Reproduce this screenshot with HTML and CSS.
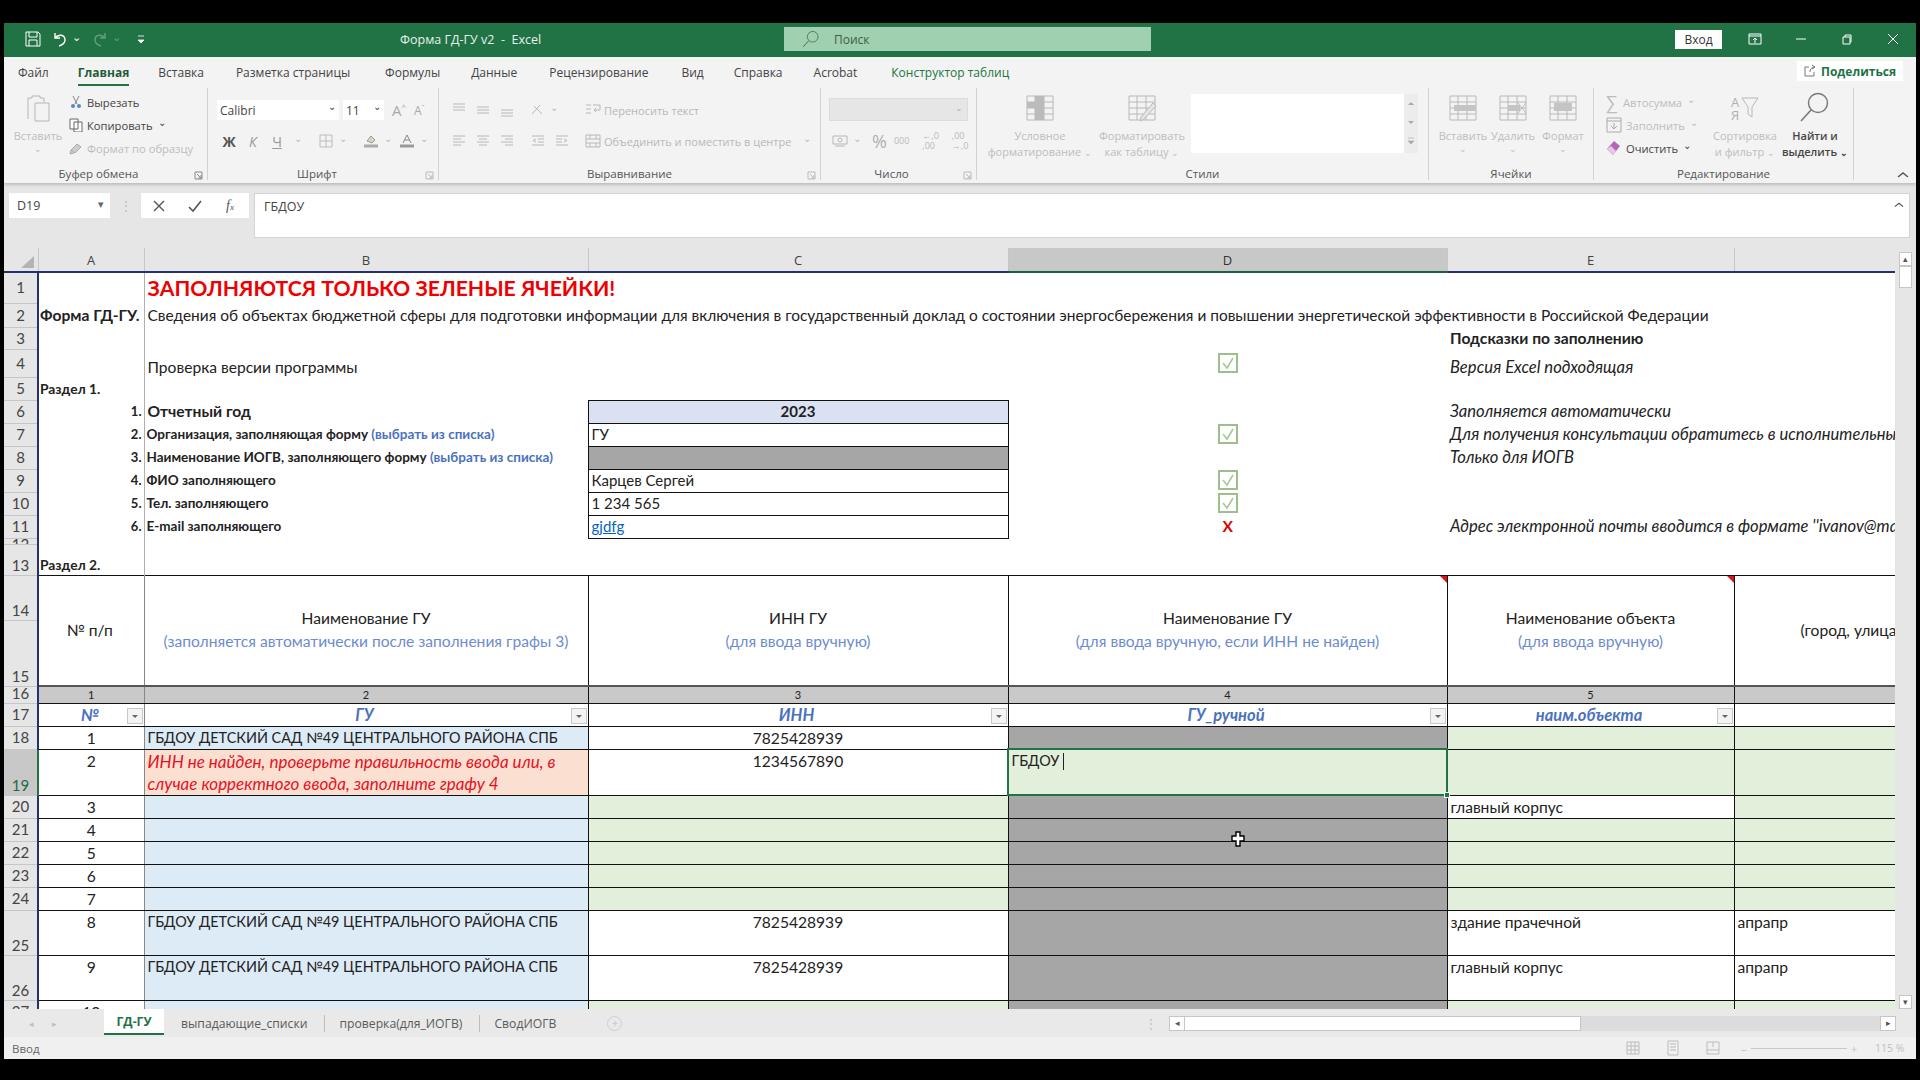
FILE: index.html
```html
<!DOCTYPE html>
<html lang="ru">
<head>
    <meta charset="UTF-8">
    <title>Форма ГД-ГУ v2 - Excel</title>
    <link rel="stylesheet" href="styles.css">
</head>
<body>
<svg class="defs" xmlns="http://www.w3.org/2000/svg">
    <symbol id="check" viewBox="0 0 20 20"><rect x="1" y="1" width="18" height="18" fill="#fff" stroke="#9dbf8b" stroke-width="2"/><path d="M5 10l4 5 6-10" fill="none" stroke="#a8c898" stroke-width="1.6"/></symbol>
    <symbol id="drop" viewBox="0 0 16 16"><rect x=".5" y=".5" width="15" height="15" fill="#f3f3f3" stroke="#c8c8c8"/><path d="M5 7h6l-3 3z" fill="#666"/></symbol>
    <symbol id="lines-l" viewBox="0 0 16 16"><path d="M2 3h12M2 6h8M2 9h12M2 12h8" stroke="currentColor" fill="none"/></symbol>
    <symbol id="lines-c" viewBox="0 0 16 16"><path d="M2 3h12M4 6h8M2 9h12M4 12h8" stroke="currentColor" fill="none"/></symbol>
    <symbol id="lines-r" viewBox="0 0 16 16"><path d="M2 3h12M6 6h8M2 9h12M6 12h8" stroke="currentColor" fill="none"/></symbol>
    <symbol id="table" viewBox="0 0 30 30"><path d="M2 3h26v24H2zM2 9h26M2 15h26M2 21h26M10 3v24M19 3v24" stroke="currentColor" fill="none"/></symbol>
    <symbol id="lens" viewBox="0 0 32 32"><circle cx="19" cy="12" r="9.5" fill="none" stroke="currentColor" stroke-width="1.4"/><path d="M12 19L2 30" stroke="currentColor" stroke-width="1.6"/></symbol>
</svg>
<div class="window">
    <header class="titlebar">
        <div class="qat">
            <svg class="qi" viewBox="0 0 18 18"><path d="M2 2h12l2 2v12H2zM5 2v5h8V2M5 16v-6h8v6" fill="none" stroke="#fff"/></svg>
            <svg class="qi" viewBox="0 0 18 18"><path d="M4 3v5h5M4 8c3-4 10-4 10 2 0 3-3 5-6 6" fill="none" stroke="#fff" stroke-width="1.4"/></svg>
            <span class="qa">⌄</span>
            <svg class="qi dim" viewBox="0 0 18 18"><path d="M14 3v5H9M14 8C11 4 4 4 4 10c0 3 3 5 6 6" fill="none" stroke="#fff" stroke-width="1.4"/></svg>
            <span class="qa dim">⌄</span>
            <svg class="qc" viewBox="0 0 10 12"><path d="M2 3h6M2 7h6l-3 3z" fill="#fff" stroke="#fff" stroke-width=".8"/></svg>
        </div>
        <div class="doc-title">Форма ГД-ГУ v2&nbsp; -&nbsp; Excel</div>
        <div class="search">
            <svg class="search-ico" viewBox="0 0 32 32"><use href="#lens"/></svg>
            <span>Поиск</span>
        </div>
        <button class="signin">Вход</button>
        <svg class="win win-opt" viewBox="0 0 14 14"><path d="M1 2h12v10H1zM1 4h12M7 11V6M5 8l2-2 2 2" fill="none" stroke="#fff"/></svg>
        <svg class="win" viewBox="0 0 14 14"><path d="M2 7h10" stroke="#fff"/></svg>
        <svg class="win" viewBox="0 0 14 14"><path d="M3 5h7v7H3zM5 5V3h6v7h-1" fill="none" stroke="#fff"/></svg>
        <svg class="win" viewBox="0 0 14 14"><path d="M2 2l10 10M12 2L2 12" stroke="#fff"/></svg>
    </header>

    <nav class="tabs">
        <span class="tab t-file">Файл</span>
        <span class="tab t-home">Главная</span>
        <span class="tab t-ins">Вставка</span>
        <span class="tab t-page">Разметка страницы</span>
        <span class="tab t-form">Формулы</span>
        <span class="tab t-data">Данные</span>
        <span class="tab t-rev">Рецензирование</span>
        <span class="tab t-view">Вид</span>
        <span class="tab t-help">Справка</span>
        <span class="tab t-acro">Acrobat</span>
        <span class="tab t-design">Конструктор таблиц</span>
        <span class="share">
            <svg class="share-ico" viewBox="0 0 14 14"><path d="M6 3H2v9h9V8M7 8c0-3 2-5 5-5M9 1l3 2-3 2" fill="none" stroke="#777"/></svg>
            Поделиться
        </span>
    </nav>

    <section class="ribbon">
        <div class="group g-clip">
            <div class="group-body clip-body">
                <div class="big paste">
                    <svg class="big-ico" viewBox="0 0 30 30"><path d="M5 26V5h4V3h8v2h4v4M12 10h14v18H12z" fill="none" stroke="#b5b5b5"/></svg>
                    <span>Вставить</span>
                    <span class="tiny">⌄</span>
                </div>
                <div class="small-col">
                    <div class="small dark"><svg class="si" viewBox="0 0 14 14"><path d="M4 1l4 8M10 1L6 9" stroke="#888" fill="none"/><circle cx="4" cy="11" r="2" fill="#5a88c8"/><circle cx="10" cy="11" r="2" fill="#5a88c8"/></svg>Вырезать</div>
                    <div class="small dark"><svg class="si" viewBox="0 0 14 14"><path d="M1 1h8v10H1zM5 4h8v10H5z" fill="#fff" stroke="#666"/></svg>Копировать <span class="arrow">⌄</span></div>
                    <div class="small off"><svg class="si" viewBox="0 0 14 14"><path d="M2 9l6-6 4 3-6 6zM2 9l-1 4 4-1" fill="#ccc" stroke="#aaa"/></svg>Формат по образцу</div>
                </div>
            </div>
            <div class="group-label">Буфер обмена</div>
            <svg class="launcher" viewBox="0 0 9 9"><path d="M1 1h7v7H1zM3 3l4 4M7 4v3H4" fill="none" stroke="#888"/></svg>
        </div>

        <div class="group g-font">
            <div class="group-body font-body">
                <div class="row">
                    <span class="combo combo-font">Calibri<i>⌄</i></span>
                    <span class="combo combo-size">11<i>⌄</i></span>
                    <span class="glyph font-up">A<sup>^</sup></span>
                    <span class="glyph font-down">A<sup>ˇ</sup></span>
                </div>
                <div class="row row-fmt">
                    <b class="fmt">Ж</b><i class="fmt off-text">К</i><u class="fmt off-text">Ч</u><span class="arrow off-text">⌄</span>
                    <svg class="ri sep-left" viewBox="0 0 16 16"><path d="M2 2h12v12H2zM2 8h12M8 2v12" fill="none" stroke="#bbb"/></svg><span class="arrow off-text">⌄</span>
                    <svg class="ri sep-left" viewBox="0 0 16 16"><path d="M4 8l4-5 4 4-3 3z" fill="#cfd8c4" stroke="#999"/><path d="M1 13h14" stroke="#aaa" stroke-width="3"/></svg><span class="arrow off-text">⌄</span>
                    <svg class="ri font-color" viewBox="0 0 16 16"><path d="M4 10l4-8 4 8M5.500 7h5" fill="none" stroke="#888"/><path d="M1 13h14" stroke="#999" stroke-width="3"/></svg><span class="arrow off-text">⌄</span>
                </div>
            </div>
            <div class="group-label">Шрифт</div>
            <svg class="launcher" viewBox="0 0 9 9"><path d="M1 1h7v7H1zM3 3l4 4M7 4v3H4" fill="none" stroke="#bbb"/></svg>
        </div>

        <div class="group g-align">
            <div class="group-body align-body">
                <div class="row">
                    <svg class="ri grey" viewBox="0 0 16 16"><path d="M2 2h12M2 5h12M2 8h12" stroke="currentColor"/></svg>
                    <svg class="ri grey" viewBox="0 0 16 16"><path d="M2 5h12M2 8h12M2 11h12" stroke="currentColor"/></svg>
                    <svg class="ri grey" viewBox="0 0 16 16"><path d="M2 8h12M2 11h12M2 14h12" stroke="currentColor"/></svg>
                    <svg class="ri grey orient" viewBox="0 0 16 16"><path d="M2 12L10 3M4 4l8 8" stroke="currentColor"/></svg><span class="arrow off-text">⌄</span>
                    <svg class="ri grey wrap" viewBox="0 0 16 16"><path d="M1 3h5M1 7h5M1 11h5M8 3h7v5H9l2-2M9 8l2 2" fill="none" stroke="currentColor"/></svg>
                    <span class="off-text">Переносить текст</span>
                </div>
                <div class="row">
                    <svg class="ri grey"><use href="#lines-l"/></svg>
                    <svg class="ri grey"><use href="#lines-c"/></svg>
                    <svg class="ri grey"><use href="#lines-r"/></svg>
                    <svg class="ri grey orient" viewBox="0 0 16 16"><path d="M2 3h12M8 6h6M8 9h6M2 12h12M6 6L3 7.500 6 9" fill="none" stroke="currentColor"/></svg>
                    <svg class="ri grey" viewBox="0 0 16 16"><path d="M2 3h12M2 6h6M2 9h6M2 12h12M10 6l3 1.500L10 9" fill="none" stroke="currentColor"/></svg>
                    <svg class="ri grey merge" viewBox="0 0 16 16"><path d="M1 2h14v12H1zM1 6h14M1 10h14M5 2v4M11 2v4M5 10v4M11 10v4" fill="none" stroke="currentColor"/></svg>
                    <span class="off-text">Объединить и поместить в центре</span><span class="arrow off-text merge-arrow">⌄</span>
                </div>
            </div>
            <div class="group-label">Выравнивание</div>
            <svg class="launcher" viewBox="0 0 9 9"><path d="M1 1h7v7H1zM3 3l4 4M7 4v3H4" fill="none" stroke="#bbb"/></svg>
        </div>

        <div class="group g-num">
            <div class="group-body num-body">
                <div class="combo-num"><i>⌄</i></div>
                <div class="row num-row">
                    <svg class="ri grey" viewBox="0 0 16 16"><path d="M1 3h14v8H1zM3 13h10" fill="none" stroke="currentColor"/><circle cx="8" cy="7" r="2" fill="none" stroke="currentColor"/></svg><span class="arrow off-text">⌄</span>
                    <span class="pct">%</span>
                    <span class="tiny-num">000</span>
                    <span class="tiny-num stack">←,0<br>,00</span>
                    <span class="tiny-num stack">,00<br>→,0</span>
                </div>
            </div>
            <div class="group-label">Число</div>
            <svg class="launcher" viewBox="0 0 9 9"><path d="M1 1h7v7H1zM3 3l4 4M7 4v3H4" fill="none" stroke="#bbb"/></svg>
        </div>

        <div class="group g-styles">
            <div class="group-body styles-body">
                <div class="big style-btn">
                    <svg class="big-ico grey" viewBox="0 0 30 30"><use href="#table"/><path d="M10 3h9v6H10zM2 9h17v6H2zM10 15h9v12H10z" fill="#bbb"/></svg>
                    <span>Условное</span>
                    <span>форматирование<span class="tiny tiny-gap">⌄</span></span>
                </div>
                <div class="big style-btn">
                    <svg class="big-ico grey" viewBox="0 0 30 30"><use href="#table"/><path d="M14 24l12-14 3 3-12 13-4 2z" fill="#e4e4e4" stroke="#bbb"/></svg>
                    <span>Форматировать</span>
                    <span>как таблицу<span class="tiny tiny-gap">⌄</span></span>
                </div>
                <div class="style-gallery"></div>
                <div class="gallery-scroll">
                    <svg viewBox="0 0 14 19"><path d="M4 11l3-3 3 3z" fill="#aaa"/></svg>
                    <svg viewBox="0 0 14 19"><path d="M4 8l3 3 3-3z" fill="#aaa"/></svg>
                    <svg viewBox="0 0 14 19"><path d="M4 6h6M4 9l3 3 3-3z" fill="#aaa" stroke="#aaa" stroke-width=".6"/></svg>
                </div>
            </div>
            <div class="group-label">Стили</div>
        </div>

        <div class="group g-cells">
            <div class="group-body cells-body">
                <div class="big cell-btn">
                    <svg class="big-ico grey" viewBox="0 0 30 30"><use href="#table"/><path d="M6 12h22v6H6z" fill="#c4c4c4"/></svg>
                    <span>Вставить</span><span class="tiny">⌄</span>
                </div>
                <div class="big cell-btn">
                    <svg class="big-ico grey" viewBox="0 0 30 30"><use href="#table"/><path d="M10 12h12v6H10z" fill="#c4c4c4"/><path d="M20 10l8 10M28 10l-8 10" stroke="#bbb"/></svg>
                    <span>Удалить</span><span class="tiny">⌄</span>
                </div>
                <div class="big cell-btn">
                    <svg class="big-ico grey" viewBox="0 0 30 30"><use href="#table"/><path d="M6 10h18v8H6z" fill="#c4c4c4"/></svg>
                    <span>Формат</span><span class="tiny">⌄</span>
                </div>
            </div>
            <div class="group-label">Ячейки</div>
        </div>

        <div class="group g-edit">
            <div class="group-body edit-body">
                <div class="small-col edit-col">
                    <div class="small off"><span class="sigma">∑</span>Автосумма <span class="arrow">⌄</span></div>
                    <div class="small off"><svg class="si si-fill" viewBox="0 0 16 16"><path d="M1 1h14v14H1zM1 4h14M8 6v6M5 9l3 3 3-3" fill="none" stroke="#aaa"/></svg>Заполнить<span class="arrow">⌄</span></div>
                    <div class="small dark"><svg class="si si-fill" viewBox="0 0 16 16"><path d="M1 9l7-8 6 5-7 9z" fill="#b565b8"/><path d="M1 9l6 6 3-4-5-5z" fill="#e7c6e8"/></svg>Очистить <span class="arrow">⌄</span></div>
                </div>
                <div class="big sort-btn">
                    <svg class="big-ico grey" viewBox="0 0 30 30"><path d="M12 5h16l-6 9v10l-4-3v-7z" fill="none" stroke="currentColor"/><text x="1" y="14" class="sort-a">А</text><text x="1" y="27" class="sort-a">Я</text></svg>
                    <span>Сортировка</span>
                    <span>и фильтр<span class="tiny tiny-gap">⌄</span></span>
                </div>
                <div class="big find-btn">
                    <svg class="big-ico find-ico" viewBox="0 0 32 32"><use href="#lens"/></svg>
                    <span>Найти и</span>
                    <span>выделить<span class="tiny tiny-gap">⌄</span></span>
                </div>
            </div>
            <div class="group-label">Редактирование</div>
        </div>
        <svg class="collapse" viewBox="0 0 12 8"><path d="M1 6l5-4 5 4" fill="none" stroke="#555" stroke-width="1.4"/></svg>
    </section>

    <section class="formula">
        <div class="namebox">D19<i>▾</i></div>
        <div class="grip">⋮</div>
        <div class="fx-box">
            <svg class="fx-ico" viewBox="0 0 14 14"><path d="M2 2l10 10M12 2L2 12" stroke="#555" stroke-width="1.4"/></svg>
            <svg class="fx-ico" viewBox="0 0 14 14"><path d="M1 8l4 4 8-10" fill="none" stroke="#555" stroke-width="1.6"/></svg>
            <i class="fx">f<small>x</small></i>
        </div>
        <div class="fx-input">ГБДОУ
            <svg class="fx-chev" viewBox="0 0 12 8"><path d="M1 6l5-4 5 4" fill="none" stroke="#555" stroke-width="1.4"/></svg>
        </div>
    </section>

    <main class="sheet">
        <div class="viewport">
            <table class="grid">
                <colgroup>
                    <col class="c-rh"><col class="c-a"><col class="c-b"><col class="c-c"><col class="c-d"><col class="c-e"><col class="c-f">
                </colgroup>
                <thead>
                    <tr class="r-cols">
                        <th class="corner"><span class="corner-tri"></span></th>
                        <th class="ch">A</th><th class="ch">B</th><th class="ch">C</th><th class="ch ch-sel">D</th><th class="ch">E</th><th class="ch ch-last"></th>
                    </tr>
                </thead>
                <tbody>
                    <tr class="r-31"><th class="rh">1</th><td class="a"></td><td class="title">ЗАПОЛНЯЮТСЯ ТОЛЬКО ЗЕЛЕНЫЕ ЯЧЕЙКИ!</td><td></td><td></td><td></td><td></td></tr>
                    <tr class="r-24"><th class="rh">2</th><td class="a strong">Форма ГД-ГУ.</td><td class="lead">Сведения об объектах бюджетной сферы для подготовки информации для включения в государственный доклад о состоянии энергосбережения и повышении энергетической эффективности в Российской Федерации</td><td></td><td></td><td></td><td></td></tr>
                    <tr class="r-22"><th class="rh">3</th><td class="a"></td><td></td><td></td><td></td><td class="strong">Подсказки по заполнению</td><td></td></tr>
                    <tr class="r-28 low"><th class="rh">4</th><td class="a"></td><td>Проверка версии программы</td><td></td><td class="mid mid-up"><svg class="check"><use href="#check"/></svg></td><td class="hint">Версия Excel подходящая</td><td></td></tr>
                    <tr class="r-23"><th class="rh">5</th><td class="a sec">Раздел 1.</td><td></td><td></td><td></td><td></td><td></td></tr>
                    <tr class="r-23 form"><th class="rh">6</th><td class="a num">1.</td><td class="strong">Отчетный год</td><td class="box year">2023</td><td></td><td class="hint">Заполняется автоматически</td><td></td></tr>
                    <tr class="r-23 form"><th class="rh">7</th><td class="a num">2.</td><td class="item">Организация, заполняющая форму <span class="pick">(выбрать из списка)</span></td><td class="box">ГУ</td><td class="mid"><svg class="check"><use href="#check"/></svg></td><td class="hint">Для получения консультации обратитесь в исполнительный орган</td><td></td></tr>
                    <tr class="r-23 form"><th class="rh">8</th><td class="a num">3.</td><td class="item">Наименование ИОГВ, заполняющего форму <span class="pick">(выбрать из списка)</span></td><td class="box dk"></td><td></td><td class="hint">Только для ИОГВ</td><td></td></tr>
                    <tr class="r-23 form"><th class="rh">9</th><td class="a num">4.</td><td class="item">ФИО заполняющего</td><td class="box">Карцев Сергей</td><td class="mid"><svg class="check"><use href="#check"/></svg></td><td></td><td></td></tr>
                    <tr class="r-23 form"><th class="rh">10</th><td class="a num">5.</td><td class="item">Тел. заполняющего</td><td class="box">1 234 565</td><td class="mid"><svg class="check"><use href="#check"/></svg></td><td></td><td></td></tr>
                    <tr class="r-23 form"><th class="rh">11</th><td class="a num">6.</td><td class="item">E-mail заполняющего</td><td class="box link">gjdfg</td><td class="mid cross">X</td><td class="hint">Адрес электронной почты вводится в формате ''ivanov@mail.ru''</td><td></td></tr>
                    <tr class="r-5"><th class="rh rh-clip"><div>12</div></th><td class="a"></td><td></td><td></td><td></td><td></td><td></td></tr>
                    <tr class="r-31 low"><th class="rh rh-bottom">13</th><td class="a sec">Раздел 2.</td><td></td><td></td><td></td><td></td><td></td></tr>

                    <tr class="r-45 ruled"><th class="rh rh-bottom">14</th><td class="mid no-head" rowspan="2">№ п/п</td><td class="head" rowspan="2">Наименование ГУ<br><span class="note">(заполняется автоматически после заполнения графы 3)</span></td><td class="head" rowspan="2">ИНН ГУ<br><span class="note">(для ввода вручную)</span></td><td class="head flag" rowspan="2">Наименование ГУ<br><span class="note">(для ввода вручную, если ИНН не найден)</span></td><td class="head flag" rowspan="2">Наименование объекта<br><span class="note">(для ввода вручную)</span></td><td class="head-f" rowspan="2">(город, улица, дом)</td></tr>
                    <tr class="r-66 ruled"><th class="rh rh-bottom">15</th></tr>

                    <tr class="r-17 ruled band"><th class="rh rh-tight">16</th><td>1</td><td>2</td><td>3</td><td>4</td><td>5</td><td></td></tr>
                    <tr class="r-23 ruled filter"><th class="rh">17</th><td>№<svg class="fbtn"><use href="#drop"/></svg></td><td>ГУ<svg class="fbtn"><use href="#drop"/></svg></td><td>ИНН<svg class="fbtn"><use href="#drop"/></svg></td><td>ГУ_ручной<svg class="fbtn"><use href="#drop"/></svg></td><td>наим.объекта<svg class="fbtn"><use href="#drop"/></svg></td><td></td></tr>

                    <tr class="r-23 ruled"><th class="rh">18</th><td class="mid">1</td><td class="bl caps">ГБДОУ ДЕТСКИЙ САД №49 ЦЕНТРАЛЬНОГО РАЙОНА СПБ</td><td class="mid">7825428939</td><td class="dk"></td><td class="gr"></td><td class="gr"></td></tr>
                    <tr class="r-45 ruled tall"><th class="rh rh-bottom rh-sel">19</th><td class="mid">2</td><td class="warn">ИНН не найден, проверьте правильность ввода или, в случае корректного ввода, заполните графу 4</td><td class="mid">1234567890</td><td class="gr active caps">ГБДОУ<span class="caret"></span><span class="handle"></span></td><td class="gr"></td><td class="gr"></td></tr>
                    <tr class="r-23 ruled"><th class="rh">20</th><td class="mid">3</td><td class="bl"></td><td class="gr"></td><td class="dk"></td><td>главный корпус</td><td class="gr"></td></tr>
                    <tr class="r-23 ruled"><th class="rh">21</th><td class="mid">4</td><td class="bl"></td><td class="gr"></td><td class="dk"></td><td class="gr"></td><td class="gr"></td></tr>
                    <tr class="r-23 ruled"><th class="rh">22</th><td class="mid">5</td><td class="bl"></td><td class="gr"></td><td class="dk"></td><td class="gr"></td><td class="gr"></td></tr>
                    <tr class="r-23 ruled"><th class="rh">23</th><td class="mid">6</td><td class="bl"></td><td class="gr"></td><td class="dk"></td><td class="gr"></td><td class="gr"></td></tr>
                    <tr class="r-23 ruled"><th class="rh">24</th><td class="mid">7</td><td class="bl"></td><td class="gr"></td><td class="dk"></td><td class="gr"></td><td class="gr"></td></tr>
                    <tr class="r-45 ruled tall"><th class="rh rh-bottom">25</th><td class="mid">8</td><td class="bl caps">ГБДОУ ДЕТСКИЙ САД №49 ЦЕНТРАЛЬНОГО РАЙОНА СПБ</td><td class="mid">7825428939</td><td class="dk"></td><td>здание прачечной</td><td>апрапр</td></tr>
                    <tr class="r-45 ruled tall"><th class="rh rh-bottom">26</th><td class="mid">9</td><td class="bl caps">ГБДОУ ДЕТСКИЙ САД №49 ЦЕНТРАЛЬНОГО РАЙОНА СПБ</td><td class="mid">7825428939</td><td class="dk"></td><td>главный корпус</td><td>апрапр</td></tr>
                    <tr class="r-23 ruled"><th class="rh">27</th><td class="mid">10</td><td class="bl"></td><td class="gr"></td><td class="dk"></td><td class="gr"></td><td class="gr"></td></tr>
                </tbody>
            </table>
            <svg class="cursor" viewBox="0 0 14 16"><path d="M5 1h4v4h4v5H9v5H5v-5H1V5h4z" fill="#fff" stroke="#000" stroke-width="1.4"/></svg>
        </div>
        <div class="vscroll">
            <span class="vbtn">▴</span>
            <span class="vthumb"></span>
            <span class="vtrack"></span>
            <span class="vbtn">▾</span>
        </div>
    </main>

    <div class="sheet-tabs">
        <span class="nav-arrows"><i>◂</i><i>▸</i></span>
        <span class="stab stab-on">ГД-ГУ</span>
        <span class="stab">выпадающие_списки</span>
        <span class="stab stab-sep">проверка(для_ИОГВ)</span>
        <span class="stab stab-sep">СводИОГВ</span>
        <span class="plus">+</span>
        <span class="hgrip">⋮</span>
        <div class="hscroll">
            <span class="hbtn">◂</span>
            <span class="hthumb"></span>
            <span class="htrack"></span>
            <span class="hbtn">▸</span>
        </div>
    </div>

    <footer class="status">
        <span class="mode">Ввод</span>
        <svg class="view" viewBox="0 0 16 16"><path d="M2 2h12v12H2zM2 6h12M2 10h12M6 2v12M10 2v12" fill="none" stroke="#bbb"/></svg>
        <svg class="view" viewBox="0 0 16 16"><path d="M3 1h10v14H3zM5 4h6M5 7h6M5 10h6" fill="none" stroke="#bbb"/></svg>
        <svg class="view" viewBox="0 0 16 16"><path d="M2 2h12v12H2zM2 10h12M8 2v5" fill="none" stroke="#bbb"/></svg>
        <span class="zoom-slider"><i>–</i><b></b><i>+</i></span>
        <span class="zoom-pct">115 %</span>
    </footer>
</div>
</body>
</html>
```

FILE: styles.css
```css
/* Page */
* {
    box-sizing: border-box;
}

body {
    margin: 0;
    height: 1080px;
    overflow: hidden;
    background-color: #000;
    font-family: "Open Sans", "Noto Sans", sans-serif;
    font-size: 12px;
    color: #444;
}

.defs {
    display: none;
}

.window {
    width: 1912px;
    height: 1036px;
    margin: 23px 0 0 4px;
    display: flex;
    flex-direction: column;
    background-color: #f3f3f3;
    overflow: hidden;
}

/* Title bar */
.titlebar {
    height: 34px;
    flex: none;
    display: flex;
    align-items: center;
    padding-bottom: 2px;
    background-color: #217346;
    color: #fff;
}

.qat {
    width: 396px;
    padding-left: 20px;
    display: flex;
    align-items: center;
}

.qi {
    width: 18px;
    height: 18px;
    margin-right: 9px;
}

.qa {
    width: 13px;
    margin: -6px 6px 0 -6px;
    font-size: 11px;
}

.dim {
    opacity: 0.3;
}

.qc {
    width: 10px;
    height: 12px;
    margin-left: 5px;
}

.doc-title {
    width: 384px;
    font-size: 12.5px;
    color: #e6f1ea;
    white-space: nowrap;
}

.search {
    width: 367px;
    height: 24px;
    display: flex;
    align-items: center;
    gap: 14px;
    padding-left: 18px;
    background-color: #9fd0b0;
    color: #3d5e49;
}

.search-ico {
    width: 18px;
    height: 18px;
    color: #3f6a50;
}

.signin {
    width: 47px;
    height: 19px;
    margin-left: 524px;
    padding: 0;
    border: none;
    background-color: #fff;
    color: #333;
    font: 12px "Open Sans", sans-serif;
}

.win {
    width: 14px;
    height: 14px;
    margin-left: 32px;
}

.win-opt {
    margin-left: 26px;
}

/* Ribbon tabs */
.tabs {
    height: 31px;
    flex: none;
    position: relative;
    display: flex;
    align-items: center;
    font-size: 12px;
    color: #444;
}

.tab {
    white-space: nowrap;
}

.t-file { margin-left: 14px; }
.t-home { margin-left: 29px; font-weight: 700; color: #1f5d3a; position: relative; }
.t-home::after {
    content: "";
    position: absolute;
    left: 0;
    right: 0;
    bottom: -5px;
    height: 2px;
    background-color: #217346;
}
.t-ins { margin-left: 29px; }
.t-page { margin-left: 32px; }
.t-form { margin-left: 35px; }
.t-data { margin-left: 31px; }
.t-rev { margin-left: 32px; }
.t-view { margin-left: 33px; }
.t-help { margin-left: 30px; }
.t-acro { margin-left: 31px; }
.t-design { margin-left: 34px; color: #217346; }

.share {
    position: absolute;
    right: 13px;
    top: 4px;
    width: 106px;
    height: 20px;
    display: flex;
    align-items: center;
    gap: 4px;
    padding-left: 6px;
    background-color: #fff;
    color: #217346;
    font-weight: 700;
}

.share-ico {
    width: 14px;
    height: 14px;
}

/* Ribbon */
.ribbon {
    height: 95px;
    flex: none;
    position: relative;
    display: flex;
    box-shadow: 0 2px 3px rgba(0, 0, 0, 0.18);
    z-index: 1;
}

.group {
    position: relative;
    height: 92px;
    display: flex;
    flex-direction: column;
    border-right: 1px solid #d2d2d2;
}

.g-clip { width: 204px; }
.g-font { width: 231px; }
.g-align { width: 382px; }
.g-num { width: 156px; }
.g-styles { width: 452px; }
.g-cells { width: 165px; }
.g-edit { width: 260px; }

.group-body {
    height: 78px;
    display: flex;
}

.group-label {
    height: 14px;
    text-align: center;
    font-size: 11.5px;
    line-height: 15px;
    color: #555;
}

.g-clip .group-label { padding-right: 14px; }
.g-font .group-label { padding-right: 12px; }
.g-num .group-label { padding-right: 14px; }

.launcher {
    position: absolute;
    right: 4px;
    bottom: 0;
    width: 9px;
    height: 9px;
}

.collapse {
    position: absolute;
    right: 7px;
    bottom: 4px;
    width: 12px;
    height: 8px;
}

.big {
    display: flex;
    flex-direction: column;
    align-items: center;
    font-size: 11px;
    line-height: 16px;
    color: #bdbdbd;
    white-space: nowrap;
}

.big-ico {
    width: 30px;
    height: 30px;
    margin: 5px 0;
    flex: none;
}

.grey {
    color: #b8b8b8;
}

.tiny {
    font-size: 9px;
    line-height: 9px;
}

.tiny-gap {
    margin-left: 3px;
}

.small-col {
    display: flex;
    flex-direction: column;
    justify-content: center;
    gap: 5px;
}

.small {
    height: 18px;
    display: flex;
    align-items: center;
    font-size: 11.2px;
    white-space: nowrap;
}

.dark { color: #444; }
.off { color: #bdbdbd; }
.off-text { color: #b8b8b8; }

.si {
    width: 14px;
    height: 14px;
    margin-right: 4px;
}

.si-fill {
    width: 16px;
    height: 16px;
}

.arrow {
    margin: -6px 0 0 5px;
    font-size: 10px;
}

.row {
    display: flex;
    align-items: center;
    height: 24px;
}

/* Clipboard */
.clip-body {
    padding-left: 10px;
    align-items: flex-start;
}

.clip-body .small-col {
    padding-top: 5px;
}

.paste {
    width: 48px;
    margin-right: 7px;
}

/* Font */
.font-body {
    flex-direction: column;
    padding: 10px 0 0 9px;
    gap: 7px;
}

.combo {
    position: relative;
    height: 20px;
    display: flex;
    align-items: center;
    padding-left: 3px;
    background-color: #fff;
    font-size: 12px;
    color: #444;
}

.combo i {
    position: absolute;
    right: 3px;
    top: -1px;
    font-style: normal;
    font-size: 10px;
}

.combo-font { width: 122px; margin-right: 4px; }
.combo-size { width: 41px; margin-right: 8px; }

.glyph {
    width: 22px;
    font-size: 15px;
    color: #aaa;
}

.glyph sup {
    font-size: 8px;
}

.font-down {
    font-size: 12px;
}

.row-fmt {
    padding-left: 0;
}

.fmt {
    width: 24px;
    text-align: center;
    font-style: normal;
    font-size: 14px;
    color: #555;
}

i.fmt { font-style: italic; }

.off-text.fmt { color: #999; }

.ri {
    width: 16px;
    height: 16px;
    flex: none;
}

.sep-left {
    margin-left: 16px;
}

.font-color {
    margin-left: 7px;
}

/* Alignment */
.align-body {
    flex-direction: column;
    padding: 10px 0 0 12px;
    gap: 7px;
    font-size: 11px;
    white-space: nowrap;
}

.align-body .ri {
    margin-right: 8px;
}

.align-body .orient {
    margin-left: 7px;
}

.align-body .arrow {
    margin-left: -4px;
}

.align-body .wrap,
.align-body .merge {
    margin-left: 7px;
    margin-right: 3px;
}

.align-body .row:first-child .wrap {
    margin-left: 27px;
}

.align-body .merge-arrow {
    margin-left: 12px;
}

/* Number */
.num-body {
    flex-direction: column;
    padding: 10px 8px 0;
    gap: 8px;
}

.combo-num {
    height: 23px;
    position: relative;
    background-color: #e6e6e6;
    border: 1px solid #dcdcdc;
}

.combo-num i {
    position: absolute;
    right: 4px;
    top: 2px;
    font-style: normal;
    font-size: 9px;
    color: #aaa;
}

.num-row {
    padding-left: 3px;
}

.pct {
    margin-left: 11px;
    font-size: 18px;
    color: #b0b0b0;
}

.tiny-num {
    margin-left: 7px;
    font-size: 9px;
    line-height: 10px;
    color: #b8b8b8;
    white-space: nowrap;
}

.stack {
    margin-left: 13px;
}

/* Styles */
.styles-body {
    padding-left: 7px;
}

.style-btn {
    width: 112px;
}

.style-btn:nth-child(2) {
    width: 88px;
    margin-left: 2px;
}

.style-gallery {
    width: 213px;
    height: 59px;
    margin: 6px 0 0 5px;
    background-color: #fff;
}

.gallery-scroll {
    width: 14px;
    height: 59px;
    margin-top: 6px;
    display: flex;
    flex-direction: column;
    background-color: #ececec;
}

.gallery-scroll svg {
    width: 14px;
    height: 19px;
    flex: none;
}

/* Cells */
.cells-body {
    padding-left: 9px;
}

.cell-btn {
    width: 50px;
}

/* Editing */
.edit-body {
    padding-left: 12px;
}

.edit-col {
    width: 104px;
    justify-content: flex-start;
    padding-top: 5px;
}

.sigma {
    width: 17px;
    font-size: 18px;
}

.sort-btn {
    width: 70px;
}

.sort-a {
    font-size: 13px;
    fill: #b0b0b0;
    font-family: "Open Sans", sans-serif;
}

.find-btn {
    width: 70px;
    color: #444;
    font-weight: 600;
}

.find-ico {
    width: 32px;
    height: 32px;
    margin: 3px 0 5px;
    color: #777;
}

/* Formula bar */
.formula {
    height: 65px;
    flex: none;
    display: flex;
    align-items: flex-start;
    padding: 10px 6px 0 5px;
    background-color: #e6e6e6;
}

.namebox {
    position: relative;
    width: 101px;
    height: 25px;
    padding: 4px 8px;
    background-color: #fff;
    font-size: 12.5px;
    color: #444;
}

.namebox i {
    position: absolute;
    right: 6px;
    top: 3px;
    font-style: normal;
    font-size: 11px;
    color: #666;
}

.grip {
    width: 31px;
    text-align: center;
    line-height: 25px;
    color: #bbb;
}

.fx-box {
    width: 108px;
    height: 25px;
    display: flex;
    align-items: center;
    gap: 22px;
    padding-left: 11px;
    background-color: #fff;
}

.fx-ico {
    width: 14px;
    height: 14px;
}

.fx {
    margin-left: 2px;
    font-family: "Liberation Serif", serif;
    font-size: 14px;
    color: #555;
}

.fx small {
    font-size: 9px;
}

.fx-input {
    position: relative;
    width: 1656px;
    height: 45px;
    margin-left: 5px;
    padding: 4px 9px;
    background-color: #fff;
    border: 1px solid #d4d4d4;
    font-size: 12.5px;
    color: #444;
}

.fx-chev {
    position: absolute;
    right: 5px;
    top: 7px;
    width: 10px;
    height: 8px;
}

/* Sheet */
.sheet {
    height: 761px;
    flex: none;
    display: flex;
    background-color: #e6e6e6;
}

.viewport {
    position: relative;
    width: 1891px;
    height: 761px;
    overflow: hidden;
}

.grid {
    width: 1891px;
    table-layout: fixed;
    border-collapse: collapse;
    background-color: #fff;
    font-family: "Lato", "Open Sans", sans-serif;
    font-size: 15.6px;
    color: #222;
}

.c-rh { width: 34px; }
.c-a { width: 106px; }
.c-b { width: 444px; }
.c-c { width: 420px; }
.c-d { width: 439px; }
.c-e { width: 287px; }
.c-f { width: 161px; }

.r-cols { height: 24px; }
.r-5 { height: 5px; }
.r-17 { height: 17px; }
.r-22 { height: 22px; }
.r-23 { height: 23px; }
.r-24 { height: 24px; }
.r-28 { height: 28px; }
.r-31 { height: 31px; }
.r-45 { height: 45px; }
.r-66 { height: 66px; }

td {
    padding: 0 3px;
    line-height: 20px;
    white-space: nowrap;
}

th {
    padding: 0;
    font-weight: 400;
}

.corner {
    position: relative;
    background-color: #e6e6e6;
    border-bottom: 2px solid #26306e;
}

.corner-tri {
    position: absolute;
    right: 4px;
    bottom: 3px;
    border-left: 13px solid transparent;
    border-bottom: 12px solid #b4b4b4;
}

.ch {
    background-color: #e6e6e6;
    border-left: 1px solid #c6c6c6;
    border-bottom: 2px solid #26306e;
    font-family: "Open Sans", sans-serif;
    font-size: 13px;
    color: #444;
}

.ch-sel {
    background-color: #c8c8c8;
    border-bottom-color: #1e5c4c;
    color: #333;
}

.rh {
    padding-bottom: 1px;
    background-color: #e6e6e6;
    border-right: 2px solid #26306e;
    border-bottom: 1px solid #c6c6c6;
    font-size: 15px;
    line-height: 18px;
    color: #444;
}

.rh-bottom {
    vertical-align: bottom;
}

.rh-sel {
    background-color: #c8c8c8;
    color: #1e6b45;
    border-right-color: #217346;
}

.rh-clip {
    padding-bottom: 0;
}

.rh-clip div {
    height: 5px;
    overflow: hidden;
    line-height: 10px;
}

.rh-tight {
    padding-bottom: 0;
    line-height: 13px;
    vertical-align: top;
}

.a {
    padding-left: 1px;
    border-right: 1px solid #b0b0b0;
}

.low td {
    vertical-align: bottom;
}

.low td.mid-up {
    vertical-align: middle;
}

.form td {
    padding-bottom: 1px;
}

.strong {
    font-weight: 700;
}

.title {
    font-size: 21.2px;
    font-weight: 700;
    color: #ee0000;
}

.lead {
    font-size: 15.45px;
}

.sec {
    font-size: 13.8px;
    font-weight: 700;
}

.num {
    padding-right: 2px;
    text-align: right;
    font-size: 13px;
    font-weight: 700;
}

.item {
    padding-left: 2px;
    font-size: 13.5px;
    font-weight: 700;
}

.pick {
    color: #4a71c0;
}

.hint {
    font-size: 16.6px;
    font-style: italic;
}

.mid {
    text-align: center;
}

.no-head {
    padding-right: 6px;
}

.caps {
    font-size: 14.4px;
}

.box {
    border: 1px solid #111;
    font-size: 15px;
}

.year {
    background-color: #d9e1f2;
    text-align: center;
    font-weight: 700;
}

.dk {
    background-color: #a6a6a6;
}

.bl {
    background-color: #ddebf7;
}

.gr {
    background-color: #e2efda;
}

.link {
    color: #0563c1;
    text-decoration: underline;
}

.cross {
    color: #e00000;
    font-weight: 700;
}

.check {
    width: 20px;
    height: 20px;
    display: block;
    margin: 0 auto;
}

.ruled td {
    border: 1px solid #111;
}

.ruled td:first-of-type {
    border-right-color: #888;
}

.head {
    text-align: center;
    line-height: 23px;
}

.head-f {
    padding-left: 66px;
}

.note {
    color: #6d8ccf;
}

.flag {
    position: relative;
}

.flag::after {
    content: "";
    position: absolute;
    top: 0;
    right: 0;
    border-top: 7px solid #d8141c;
    border-left: 7px solid transparent;
}

.band td {
    background-color: #c9c9c9;
    border-top: 2px solid #555;
    text-align: center;
    font-size: 11px;
    line-height: 13px;
}

.filter td {
    position: relative;
    padding-right: 6px;
    text-align: center;
    font-size: 16.5px;
    font-weight: 700;
    font-style: italic;
    color: #4a71c0;
}

.fbtn {
    position: absolute;
    right: 1px;
    top: 4px;
    width: 16px;
    height: 16px;
}

.tall td {
    padding-top: 1px;
    vertical-align: top;
}

.warn {
    background-color: #fbe0d2;
    color: #e8101e;
    font-size: 17px;
    font-style: italic;
    white-space: normal;
    line-height: 22px;
}

.active {
    position: relative;
    outline: 2px solid #217346;
    outline-offset: -1px;
}

.caret {
    display: inline-block;
    width: 1px;
    height: 17px;
    margin-left: 4px;
    vertical-align: middle;
    background-color: #222;
}

.handle {
    position: absolute;
    right: -3px;
    bottom: -3px;
    width: 6px;
    height: 6px;
    background-color: #217346;
    border: 1px solid #fff;
}

.cursor {
    position: absolute;
    left: 1227px;
    top: 583px;
    width: 14px;
    height: 16px;
}

/* Vertical scrollbar */
.vscroll {
    width: 21px;
    padding: 4px 4px 0;
    display: flex;
    flex-direction: column;
}

.vbtn {
    height: 14px;
    background-color: #fff;
    border: 1px solid #c6c6c6;
    font-size: 9px;
    line-height: 11px;
    text-align: center;
    color: #555;
}

.vthumb {
    height: 22px;
    background-color: #fff;
    border: 1px solid #c6c6c6;
}

.vtrack {
    height: 707px;
}

/* Sheet tabs */
.sheet-tabs {
    height: 28px;
    flex: none;
    display: flex;
    align-items: center;
    background-color: #e9e9e9;
    font-size: 12.2px;
    color: #5a5a5a;
}

.nav-arrows {
    width: 100px;
    padding-left: 25px;
    display: flex;
    gap: 18px;
    font-size: 9px;
    color: #c0c0c0;
}

.nav-arrows i {
    font-style: normal;
}

.stab {
    padding: 0 17px 0 14px;
    white-space: nowrap;
}

.stab-on {
    width: 60px;
    height: 30px;
    margin-top: -6px;
    margin-right: 3px;
    padding: 8px 0 0;
    text-align: center;
    background-color: #fff;
    border-bottom: 2px solid #217346;
    color: #217346;
    font-weight: 700;
}

.stab-sep {
    border-left: 1px solid #bdbdbd;
}

.plus {
    width: 15px;
    height: 15px;
    margin-left: 34px;
    border: 1px solid #cfcfcf;
    border-radius: 50%;
    font-size: 11px;
    line-height: 12px;
    text-align: center;
    color: #c0c0c0;
}

.hgrip {
    margin-left: 523px;
    color: #c0c0c0;
}

.hscroll {
    display: flex;
    align-items: center;
    height: 15px;
    margin-left: 12px;
}

.hbtn {
    width: 16px;
    height: 15px;
    background-color: #fff;
    border: 1px solid #c6c6c6;
    font-size: 9px;
    line-height: 12px;
    text-align: center;
    color: #555;
}

.hthumb {
    width: 396px;
    height: 15px;
    background-color: #fff;
    border: 1px solid #c6c6c6;
    border-left: none;
}

.htrack {
    width: 299px;
    height: 15px;
    background-color: #dcdcdc;
}

/* Status bar */
.status {
    height: 22px;
    flex: none;
    display: flex;
    align-items: center;
    background-color: #f0f0f0;
    font-size: 11.5px;
    color: #666;
}

.mode {
    width: 1621px;
    padding-left: 8px;
}

.view {
    width: 16px;
    height: 16px;
    margin-right: 24px;
}

.zoom-slider {
    width: 130px;
    display: flex;
    align-items: center;
    gap: 4px;
    color: #c0c0c0;
    margin-left: -4px;
}

.zoom-slider i {
    font-style: normal;
}

.zoom-slider b {
    width: 96px;
    height: 1px;
    background-color: #c8c8c8;
}

.zoom-pct {
    margin-left: 4px;
    font-size: 10.5px;
    color: #c0c0c0;
}
```
